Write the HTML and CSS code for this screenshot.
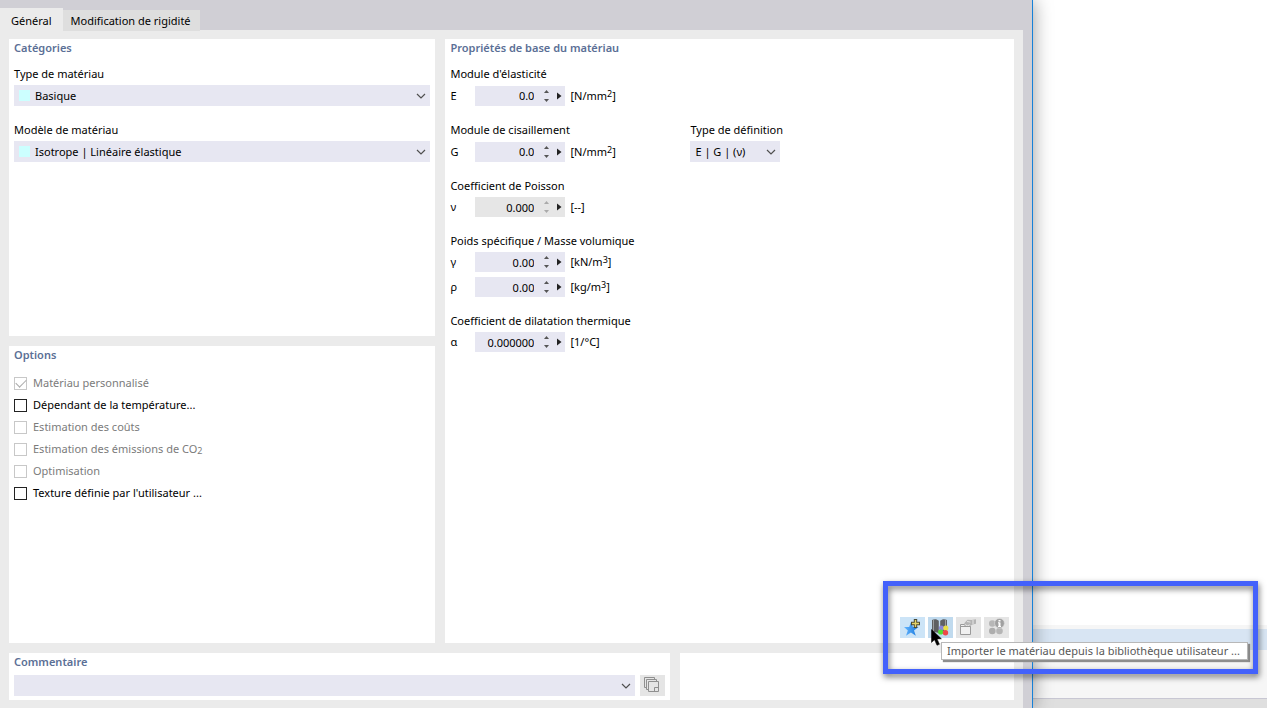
FILE: index.html
```
<!DOCTYPE html>
<html lang="fr">
<head>
<meta charset="utf-8">
<title>Matériau</title>
<link rel="stylesheet" href="styles.css">
</head>
<body>
<svg class="defs" aria-hidden="true">
  <symbol id="chevron" viewBox="0 0 10 6"><path d="M1 1l4 4 4-4" fill="none" stroke="#505050" stroke-width="1.2"/></symbol>
  <symbol id="up" viewBox="0 0 5 3"><path d="M0 3L2.500 0 5 3z" fill="currentColor"/></symbol>
  <symbol id="down" viewBox="0 0 5 3"><path d="M0 0h5L2.500 3z" fill="currentColor"/></symbol>
  <symbol id="next" viewBox="0 0 5 8"><path d="M0 .5L4.500 4 0 7.500z" fill="#222"/></symbol>
</svg>
<div class="screen">
  <main class="dialog">
    <nav class="tabs" role="tablist">
      <button class="tab tab-active" role="tab" aria-selected="true">Général</button>
      <button class="tab" role="tab" aria-selected="false">Modification de rigidité</button>
    </nav>
    <div class="content">
      <div class="columns">
        <div class="left">
          <section class="panel">
            <h2>Catégories</h2>
            <div class="groups">
              <div class="group">
                <label for="type">Type de matériau</label>
                <div class="combo combo-swatch"><span class="swatch"></span><select id="type"><option>Basique</option></select><svg class="chevron"><use href="#chevron"/></svg></div>
              </div>
              <div class="group">
                <label for="model">Modèle de matériau</label>
                <div class="combo combo-swatch"><span class="swatch"></span><select id="model"><option>Isotrope | Linéaire élastique</option></select><svg class="chevron"><use href="#chevron"/></svg></div>
              </div>
            </div>
          </section>
          <section class="panel">
            <h2>Options</h2>
            <div class="options">
              <label class="option disabled"><input type="checkbox" checked disabled><span>Matériau personnalisé</span></label>
              <label class="option"><input type="checkbox"><span>Dépendant de la température...</span></label>
              <label class="option disabled"><input type="checkbox" disabled><span>Estimation des coûts</span></label>
              <label class="option disabled"><input type="checkbox" disabled><span>Estimation des émissions de CO<sub>2</sub></span></label>
              <label class="option disabled"><input type="checkbox" disabled><span>Optimisation</span></label>
              <label class="option"><input type="checkbox"><span>Texture définie par l'utilisateur ...</span></label>
            </div>
          </section>
        </div>
        <section class="panel">
          <h2>Propriétés de base du matériau</h2>
          <div class="groups">
            <div class="group">
              <div class="title">Module d'élasticité</div>
              <div class="row row-tall">
                <label for="e">E</label>
                <div class="spin"><input id="e" value="0.0"><span class="steps"><button aria-label="Augmenter"><svg><use href="#up"/></svg></button><button aria-label="Diminuer"><svg><use href="#down"/></svg></button></span><button class="next" aria-label="Plus"><svg><use href="#next"/></svg></button></div>
                <span>[N/mm<sup>2</sup>]</span>
              </div>
            </div>
            <div class="pair">
              <div class="group">
                <div class="title">Module de cisaillement</div>
                <div class="row row-tall">
                  <label for="g">G</label>
                  <div class="spin"><input id="g" value="0.0"><span class="steps"><button aria-label="Augmenter"><svg><use href="#up"/></svg></button><button aria-label="Diminuer"><svg><use href="#down"/></svg></button></span><button class="next" aria-label="Plus"><svg><use href="#next"/></svg></button></div>
                  <span>[N/mm<sup>2</sup>]</span>
                </div>
              </div>
              <div class="group">
                <label for="def">Type de définition</label>
                <div class="combo combo-short"><select id="def"><option>E | G | (ν)</option></select><svg class="chevron"><use href="#chevron"/></svg></div>
              </div>
            </div>
            <div class="group">
              <div class="title">Coefficient de Poisson</div>
              <div class="row">
                <label for="nu">ν</label>
                <div class="spin spin-off"><input id="nu" value="0.000" readonly><span class="steps"><button aria-label="Augmenter" disabled><svg><use href="#up"/></svg></button><button aria-label="Diminuer" disabled><svg><use href="#down"/></svg></button></span><button class="next" aria-label="Plus"><svg><use href="#next"/></svg></button></div>
                <span>[--]</span>
              </div>
            </div>
            <div class="group">
              <div class="title">Poids spécifique / Masse volumique</div>
              <div class="rows">
                <div class="row">
                  <label for="gamma">γ</label>
                  <div class="spin"><input id="gamma" value="0.00"><span class="steps"><button aria-label="Augmenter"><svg><use href="#up"/></svg></button><button aria-label="Diminuer"><svg><use href="#down"/></svg></button></span><button class="next" aria-label="Plus"><svg><use href="#next"/></svg></button></div>
                  <span>[kN/m<sup>3</sup>]</span>
                </div>
                <div class="row">
                  <label for="rho">ρ</label>
                  <div class="spin"><input id="rho" value="0.00"><span class="steps"><button aria-label="Augmenter"><svg><use href="#up"/></svg></button><button aria-label="Diminuer"><svg><use href="#down"/></svg></button></span><button class="next" aria-label="Plus"><svg><use href="#next"/></svg></button></div>
                  <span>[kg/m<sup>3</sup>]</span>
                </div>
              </div>
            </div>
            <div class="group">
              <div class="title">Coefficient de dilatation thermique</div>
              <div class="row">
                <label for="alpha">α</label>
                <div class="spin"><input id="alpha" value="0.000000"><span class="steps"><button aria-label="Augmenter"><svg><use href="#up"/></svg></button><button aria-label="Diminuer"><svg><use href="#down"/></svg></button></span><button class="next" aria-label="Plus"><svg><use href="#next"/></svg></button></div>
                <span>[1/°C]</span>
              </div>
            </div>
          </div>
          <div class="tools">
            <button class="tool tool-on" aria-label="Enregistrer dans la bibliothèque">
              <svg viewBox="0 0 25 21"><defs><linearGradient id="blue" x1="0" x2="1"><stop offset="0" stop-color="#64b5ff"/><stop offset="1" stop-color="#1878dc"/></linearGradient></defs><path d="M11 5l1.900 5h5.600l-4.500 3.500 1.800 5.200-4.900-3.100-4.900 3.100 1.800-5.200L4 10h5.200z" fill="url(#blue)"/><path d="M15.500 2v9M11 6.500h9" stroke="#4c4a32" stroke-width="3.400"/><path d="M15.500 3v7M12 6.500h7" stroke="#e2d36a" stroke-width="1.400"/></svg>
            </button>
            <div class="tool-wrap">
              <button class="tool tool-hover" aria-describedby="tip" aria-label="Importer">
                <svg viewBox="0 0 25 21"><path d="M4 3c2-1.200 5-1.200 6.800.8v12.500C9 15 6 14.800 4 15.800zM12.200 3.800C14 1.800 17 1.800 19 3v9l-6.800 4z" fill="#5f6062"/><path d="M5.500 3v12M17.500 3v6" stroke="#9b9d9f" fill="none"/><circle cx="13.500" cy="11" r="2.600" fill="#8b86d8"/><circle cx="17.800" cy="11" r="2.600" fill="#e9df45"/><circle cx="12.700" cy="15" r="2.600" fill="#50df35"/><circle cx="17.500" cy="15.700" r="2.700" fill="#ed4848"/></svg>
              </button>
              <svg class="cursor" viewBox="0 0 11 17" aria-hidden="true"><path d="M.5.5v13l3-2.700L6 16.300l2.400-1-2.300-5.400 4.300-.1z" fill="#000" stroke="#000" stroke-width=".5"/></svg>
              <div class="tip" id="tip" role="tooltip">Importer le matériau depuis la bibliothèque utilisateur ...</div>
            </div>
            <button class="tool" aria-label="Modifier" disabled>
              <svg viewBox="0 0 25 21"><path d="M4.500 17.500v-10h4l1 2h5v8z" fill="#f1f1f1" stroke="#9a9a9a"/><path d="M4.500 9.500h10" stroke="#9a9a9a"/><path d="M8 6.500l3.500-3.700 4 .2 4.500-.8v4.600l-3.500.8-2.500 1.400-1-.8 1.500-1.800-3 2z" fill="#b4b4b4"/><path d="M11 4.500l3.500.6M17 3v4" stroke="#e6e6e6" fill="none"/></svg>
            </button>
            <button class="tool" aria-label="Informations" disabled>
              <svg viewBox="0 0 25 21"><circle cx="8.300" cy="6.500" r="3.300" fill="#b7b7b7"/><circle cx="8.300" cy="14" r="3.300" fill="#adadad"/><circle cx="15.500" cy="14" r="3.300" fill="#b5b5b5"/><circle cx="15.500" cy="6.300" r="4.900" fill="#a0a0a0" stroke="#e4e4e4" stroke-width=".6"/><path d="M15.500 5.500v4" stroke="#fff" stroke-width="2"/><path d="M14.500 3h2v1.500h-2zM14 5.300h1.500v1H14zM14 9h3v1h-3z" fill="#fff"/></svg>
            </button>
          </div>
        </section>
      </div>
      <div class="footer">
        <section class="panel panel-comment">
          <h2><label for="comment">Commentaire</label></h2>
          <div class="comment">
            <div class="combo"><select id="comment"><option></option></select><svg class="chevron"><use href="#chevron"/></svg></div>
            <button class="tool" aria-label="Copier"><svg viewBox="0 0 25 21"><path d="M6.500 12.500h-2v-10h10v2M8.500 14.500h-2v-10h10v2M8.500 6.500h10v10h-10z" fill="none" stroke="#8f8f8f"/><path d="M14.500 16.500v-4h4" fill="none" stroke="#8f8f8f"/></svg></button>
          </div>
        </section>
        <section class="panel"></section>
      </div>
    </div>
  </main>
  <aside class="behind">
    <div class="selection"></div>
    <div class="status"></div>
  </aside>
  <div class="highlight"></div>
</div>
</body>
</html>
```

FILE: styles.css
```
* { box-sizing: border-box; }
body { margin: 0; font: 11px/18px "Noto Sans", "Open Sans", sans-serif; color: #000; }
button, input, select { font: inherit; color: inherit; border: 0; margin: 0; padding: 0; background: none; border-radius: 0; appearance: none; }
.defs { display: none; }
svg { display: block; }
.screen { position: relative; display: flex; min-height: 100vh; overflow: hidden; background: #fff; }

.dialog { position: relative; z-index: 1; flex: 1; display: flex; flex-direction: column; padding-right: 9px; background: #d0cfd5; border-right: 1px solid #1681d8; box-shadow: 0 0 18px rgba(0, 0, 0, .4); }
.tabs { display: flex; align-items: flex-end; height: 31px; margin-bottom: -1px; z-index: 1; }
.tab { height: 21px; padding: 0 9px 0 8px; background: #dedede; }
.tab-active { height: 23px; padding: 2px 11px 0; background: #ebebeb; }
.content { flex: 1; display: flex; flex-direction: column; gap: 10px; padding: 9px 9px 8px; background: #ebebeb; }
.columns { flex: 1; display: grid; grid-template-columns: 3fr 4fr; gap: 10px; }
.left { display: grid; grid-template-rows: 1fr 1fr; gap: 10px; }
.footer { display: grid; grid-template-columns: 661fr 334fr; gap: 10px; }
.panel { display: flex; flex-direction: column; padding: 0 5px 5px; background: #fff; }
.panel-comment { padding-bottom: 4px; }
h2 { margin: 0; font-size: 11px; font-weight: 600; color: #5b6f96; }

.groups { display: flex; flex-direction: column; gap: 15px; padding-top: 8px; }
.group { display: flex; flex-direction: column; gap: 2px; }
.pair { display: grid; grid-template-columns: 230px auto; gap: 10px; justify-content: start; }
.combo { position: relative; flex: 1; display: flex; align-items: center; height: 21px; background: #e7e7f2; }
.group .combo { flex: none; }
.combo select { flex: 1; width: 100%; height: 21px; padding: 0 20px 0 5px; }
.combo-short { width: 90px; }
.combo-swatch { padding-left: 5px; }
.swatch { width: 11px; height: 11px; background: #ccffff; }
.chevron { position: absolute; right: 4px; width: 10px; height: 6px; pointer-events: none; }

.rows { display: flex; flex-direction: column; gap: 5px; }
.row { display: grid; grid-template-columns: 20px 90px auto; column-gap: 5px; align-items: center; height: 20px; }
.row-tall { height: 21px; }
.spin { display: flex; align-items: center; height: 20px; background: #e7e7f2; }
.spin input { width: 59px; height: 20px; text-align: right; }
.spin-off { background: #e6e6e6; }
.steps { display: flex; flex-direction: column; gap: 6px; width: 5px; margin: 0 8px 0 10px; color: #555; }
.spin-off .steps { color: #aaa; }
.steps button, .steps svg { display: block; width: 5px; height: 3px; }
.next, .next svg { width: 5px; height: 8px; }
sup, sub { font-size: 9px; line-height: 0; }
sup { vertical-align: 3px; }
sub { vertical-align: -1px; }

.options { display: flex; flex-direction: column; padding-top: 8px; }
.option { display: flex; align-items: center; gap: 6px; height: 22px; }
.option input { position: relative; width: 13px; height: 13px; border: 1px solid #222; background: #fff; }
.disabled { color: #7b7b7b; }
.disabled input { border-color: #c8c8c8; }
.option input:checked::after { content: ""; position: absolute; left: 1px; top: 1px; width: 9px; height: 5px; border: solid #aaa; border-width: 0 0 1px 1px; transform: rotate(-45deg); }

.tools { display: flex; justify-content: flex-end; gap: 3px; margin-top: auto; }
.tool { width: 25px; height: 21px; background: #e5e5e5; }
.tool svg { width: 25px; height: 21px; }
.tool-on { background: #cce4f7; }
.tool-hover { background: #c0daee; }
.tool-wrap { position: relative; display: flex; z-index: 1; }
.cursor { position: absolute; z-index: 1; left: 3px; top: 12px; width: 11px; height: 17px; }
.tip { position: absolute; left: 13px; top: 25px; width: max-content; height: 18px; padding: 0 7px 0 5px; line-height: 16px; color: #575757; background: #fff; border: 1px solid #b8b8b8; box-shadow: 2px 2px 1px #8e8e8e; }
.comment { display: flex; gap: 5px; padding-top: 4px; }

.behind { width: 234px; display: flex; flex-direction: column; justify-content: flex-end; }
.selection { height: 73px; padding: 4px 0 48px; background: linear-gradient(#d8e5f3, #d8e5f3) content-box, #f6f6f6; }
.status { height: 10px; background: #dfdfdf; border-top: 1px solid #c8c7d3; }
.highlight { position: absolute; z-index: 2; right: 9px; bottom: 34px; width: 375px; height: 93px; border: 5px solid #4361fb; filter: drop-shadow(1px 3px 3px rgba(0, 0, 0, .55)); pointer-events: none; }
```
